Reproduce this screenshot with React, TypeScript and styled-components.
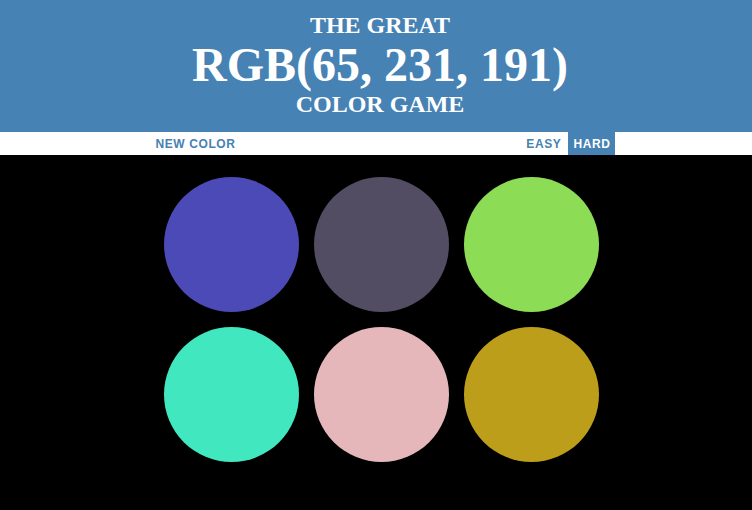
import React from "react";
import styled, { createGlobalStyle } from "styled-components";

const Global = createGlobalStyle`
  html, body { margin: 0; padding: 0; background: #000; }
  body { font-family: "Liberation Sans", Arial, sans-serif; }
`;

const Header = styled.h1`
  margin: 0;
  padding: 12px 0 15px 8px;
  background: #4682b4;
  color: #fff;
  text-align: center;
  text-transform: uppercase;
  font-family: "Liberation Serif", "Times New Roman", serif;
  font-weight: 700;
`;

const Line = styled.div<{ $big?: boolean }>`
  font-size: ${(p) => (p.$big ? "48px" : "24px")};
  line-height: ${(p) => (p.$big ? "53px" : "26px")};
`;

const Stripe = styled.div`
  background: #fff;
  height: 23px;
  padding-left: 13px;
`;

const StripeInner = styled.div`
  width: 464px;
  height: 100%;
  margin: 0 auto;
  display: flex;
  align-items: stretch;
`;

const Spacer = styled.div`
  flex: 1;
`;

const Button = styled.button<{ $selected?: boolean }>`
  border: none;
  margin: 0;
  height: 100%;
  padding: 0 4px 0 5px;
  font-family: "Liberation Sans", Arial, sans-serif;
  font-size: 12px;
  font-weight: 700;
  letter-spacing: 0.6px;
  text-transform: uppercase;
  background: ${(p) => (p.$selected ? "#4682b4" : "transparent")};
  color: ${(p) => (p.$selected ? "#fff" : "#4682b4")};
  cursor: pointer;
  & + & {
    margin-left: 3px;
  }
`;

const Board = styled.div`
  padding: 22px 0 0 11px;
`;

const Grid = styled.div`
  width: 435px;
  margin: 0 auto;
  display: grid;
  grid-template-columns: repeat(3, 135px);
  gap: 15px;
`;

const Square = styled.div<{ $color: string }>`
  width: 135px;
  height: 135px;
  border-radius: 50%;
  background: ${(p) => p.$color};
`;

const colors = [
  "rgb(76, 74, 183)",
  "rgb(82, 77, 99)",
  "rgb(141, 220, 85)",
  "rgb(65, 231, 191)",
  "rgb(229, 183, 186)",
  "rgb(189, 158, 26)",
];

export default function App() {
  return (
    <>
      <Global />
      <Header>
        <Line>The Great</Line>
        <Line $big>RGB(65, 231, 191)</Line>
        <Line>Color Game</Line>
      </Header>
      <Stripe>
        <StripeInner>
          <Button>New Color</Button>
          <Spacer />
          <Button>Easy</Button>
          <Button $selected>Hard</Button>
        </StripeInner>
      </Stripe>
      <Board>
        <Grid>
          {colors.map((c) => (
            <Square key={c} $color={c} />
          ))}
        </Grid>
      </Board>
    </>
  );
}
